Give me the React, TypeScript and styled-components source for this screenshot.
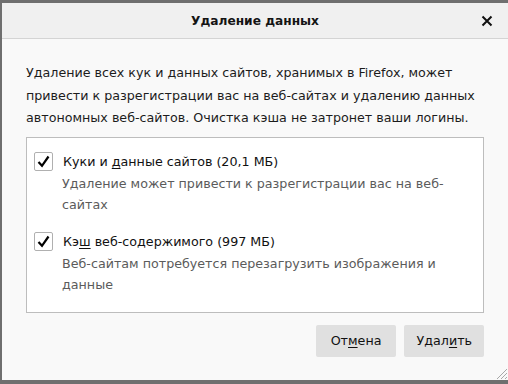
import React from 'react'
import styled, { createGlobalStyle } from 'styled-components'

const GlobalStyle = createGlobalStyle`
  html, body {
    margin: 0;
    padding: 0;
    background: #6f6f6f;
    font-family: 'DejaVu Sans', 'Liberation Sans', sans-serif;
  }
`

const Screen = styled.div`
  width: 508px;
  height: 384px;
  overflow: hidden;
  padding: 3px 0 0 2px;
  box-sizing: border-box;
`

const Dialog = styled.div`
  position: relative;
  width: 506px;
  height: 377px;
  background: #f9f9f9;
  display: flex;
  flex-direction: column;
`

const Header = styled.div`
  height: 35px;
  flex: none;
  background: #f0f0f0;
  border-bottom: 1px solid #d4d4d4;
  display: flex;
  align-items: center;
  justify-content: center;
  position: relative;
`

const Title = styled.div`
  font-size: 12.2px;
  font-weight: bold;
  color: #141414;
`

const CloseButton = styled.button`
  position: absolute;
  right: 13px;
  top: 10px;
  width: 16px;
  height: 16px;
  padding: 0;
  border: none;
  background: transparent;
  display: flex;
  align-items: center;
  justify-content: center;
`

const Body = styled.div`
  flex: 1;
  padding: 23px 24px 0 24px;
  display: flex;
  flex-direction: column;
`

const Intro = styled.p`
  margin: 0 0 7px 0;
  font-size: 12.7px;
  line-height: 22.5px;
  color: #1c1c1c;
`

const OptionsBox = styled.div`
  background: #fff;
  border: 1px solid #bdbdbd;
  padding: 13px 7px 17px 7px;
  display: flex;
  flex-direction: column;
  gap: 16px;
`

const Option = styled.div`
  display: grid;
  grid-template-columns: 19px 1fr;
  column-gap: 10px;
  align-items: start;
`

const Box = styled.div`
  width: 17px;
  height: 17px;
  margin-top: 1px;
  border: 1px solid #b0b0b0;
  border-radius: 2px;
  background: #fff;
  display: flex;
  align-items: center;
  justify-content: center;
`

const Label = styled.div`
  font-size: 12.7px;
  line-height: 20px;
  padding-top: 1px;
  color: #111;
`

const Hint = styled.div`
  grid-column: 2;
  margin-left: -1px;
  margin-top: 1px;
  font-size: 12.7px;
  line-height: 21px;
  color: #5b5b5b;
`

const Key = styled.span`
  text-decoration: underline;
  text-underline-offset: 2px;
`

const Footer = styled.div`
  display: flex;
  justify-content: flex-end;
  gap: 8px;
  padding: 12px 0 0 0;
`

const Button = styled.button<{ pad: number }>`
  height: 32px;
  padding: 0 ${p => p.pad}px;
  border: none;
  border-radius: 2px;
  background: #e0e0e0;
  font-family: 'DejaVu Sans', 'Liberation Sans', sans-serif;
  font-size: 12.7px;
  color: #111;
`

const Grip = styled.svg`
  position: absolute;
  right: 0;
  bottom: 0;
`

function Check() {
  return (
    <Box>
      <svg width="13" height="13" viewBox="0 0 13 13">
        <path d="M1.5 7 L5 10.8 L11.5 1.5" fill="none" stroke="#000" strokeWidth="2.2" />
      </svg>
    </Box>
  )
}

export default function App() {
  return (
    <Screen>
      <GlobalStyle />
      <Dialog>
        <Header>
          <Title>Удаление данных</Title>
          <CloseButton>
            <svg width="12" height="12" viewBox="0 0 12 12">
              <path d="M1.5 1.5 L10.5 10.5 M10.5 1.5 L1.5 10.5" stroke="#111" strokeWidth="2" />
            </svg>
          </CloseButton>
        </Header>
        <Body>
          <Intro>
            Удаление всех кук и данных сайтов, хранимых в Firefox, может привести к разрегистрации вас на
            веб-сайтах и удалению данных автономных веб-сайтов. Очистка кэша не затронет ваши логины.
          </Intro>
          <OptionsBox>
            <Option>
              <Check />
              <Label>
                Куки и <Key>д</Key>анные сайтов (20,1 МБ)
              </Label>
              <Hint>Удаление может привести к разрегистрации вас на веб-сайтах</Hint>
            </Option>
            <Option>
              <Check />
              <Label>
                Кэ<Key>ш</Key> веб-содержимого (997 МБ)
              </Label>
              <Hint>Веб-сайтам потребуется перезагрузить изображения и данные</Hint>
            </Option>
          </OptionsBox>
          <Footer>
            <Button pad={15}>
              От<Key>м</Key>ена
            </Button>
            <Button pad={12}>
              Удал<Key>и</Key>ть
            </Button>
          </Footer>
        </Body>
        <Grip width="13" height="13" viewBox="0 0 13 13">
          <path d="M12 2 L2 12 M12 6 L6 12 M12 10 L10 12" stroke="#a8a8a8" strokeWidth="1" />
        </Grip>
      </Dialog>
    </Screen>
  )
}
